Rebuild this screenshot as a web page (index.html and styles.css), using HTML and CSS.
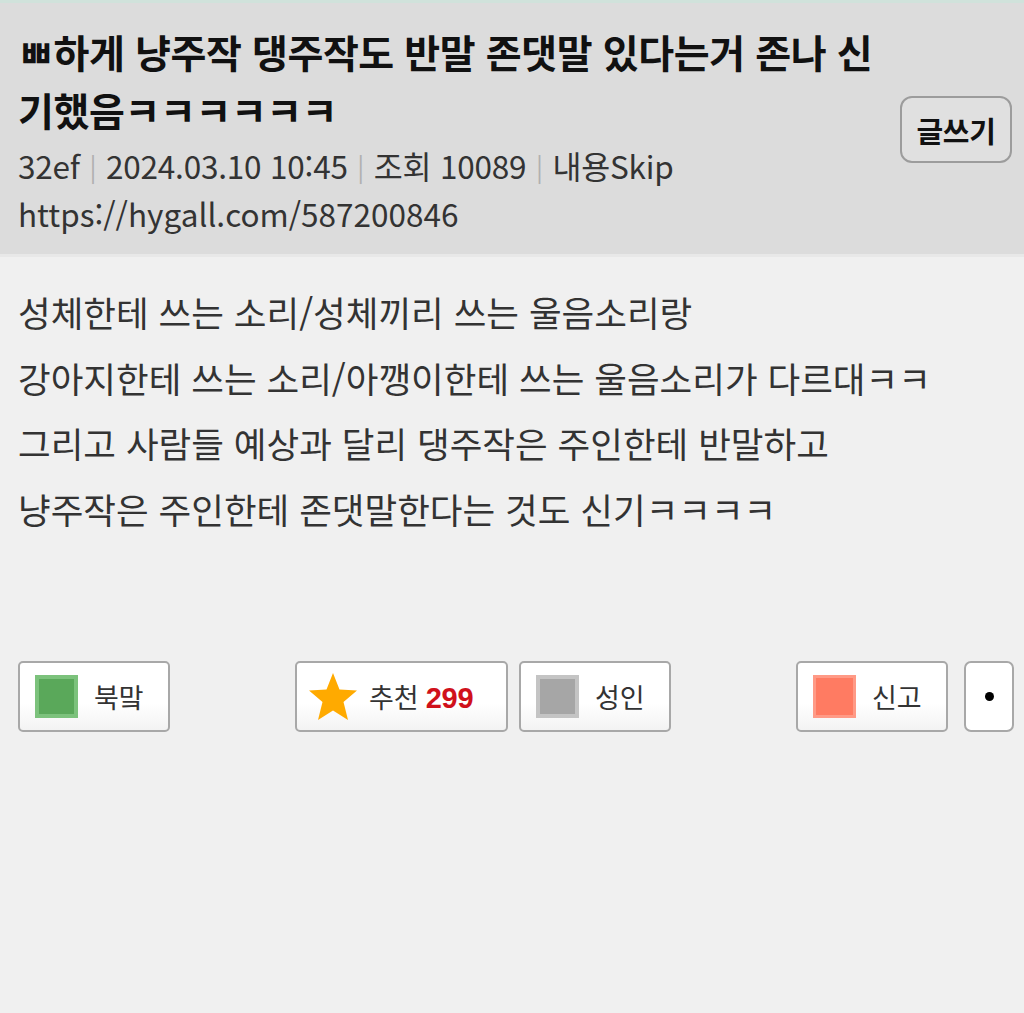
FILE: index.html
```html
<!DOCTYPE html>
<html lang="ko">
<head>
<meta charset="utf-8">
<title>hygall</title>
<link rel="stylesheet" href="styles.css">
</head>
<body>
<div class="topstrip"></div>
<header class="head">
  <div class="head-main">
    <h1 class="title">ㅃ하게 냥주작 댕주작도 반말 존댓말 있다는거 존나 신기했음ㅋㅋㅋㅋㅋㅋ</h1>
    <div class="meta">32ef <span class="sep">|</span> 2024.03.10 10:45 <span class="sep">|</span> 조회 10089 <span class="sep">|</span> 내용Skip</div>
    <div class="url">https://hygall.com/587200846</div>
  </div>
  <button class="write">글쓰기</button>
</header>
<main class="content">
  <p class="line">성체한테 쓰는 소리/성체끼리 쓰는 울음소리랑</p>
  <p class="line">강아지한테 쓰는 소리/아깽이한테 쓰는 울음소리가 다르대ㅋㅋ</p>
  <p class="line">그리고 사람들 예상과 달리 댕주작은 주인한테 반말하고</p>
  <p class="line">냥주작은 주인한테 존댓말한다는 것도 신기ㅋㅋㅋㅋ</p>
</main>
<div class="actions">
  <div class="group">
    <button class="btn"><span class="sq sq-green"></span><span class="lbl">북맠</span></button>
  </div>
  <div class="group group-mid">
    <button class="btn btn-rec">
      <svg class="star" viewBox="0 0 52 52" width="52" height="52"><polygon points="26,2 32.5,18.5 50,19.5 36.5,31 41,49 26,39.5 11,49 15.5,31 2,19.5 19.5,18.5" fill="#ffaa00"/></svg>
      <span class="lbl">추천 <b class="num">299</b></span>
    </button>
    <button class="btn"><span class="sq sq-gray"></span><span class="lbl">성인</span></button>
  </div>
  <div class="group group-right">
    <button class="btn"><span class="sq sq-red"></span><span class="lbl">신고</span></button>
    <button class="btn btn-dot"><span class="dot"></span></button>
  </div>
</div>
</body>
</html>
```
FILE: styles.css
```css
html, body {
  margin: 0;
  padding: 0;
}
body {
  background: #f0f0f0;
  font-family: "Noto Sans CJK KR", "Noto Sans", sans-serif;
  color: #333;
  width: 1024px;
  min-height: 1013px;
}
.topstrip {
  height: 3px;
  background: #d0e2db;
}
.head {
  background: #dcdcdc;
  height: 254px;
  box-sizing: border-box;
  padding: 19px 12px 0 18px;
  display: flex;
  align-items: flex-start;
  border-bottom: 3px solid #e8e8e8;
}
.head-main {
  flex: 1;
}
.title {
  margin: 0;
  width: 875px;
  font-size: 39px;
  line-height: 58px;
  font-weight: 700;
  color: #111;
  letter-spacing: -0.4px;
}
.meta {
  font-size: 31.5px;
  line-height: 47px;
  margin-top: 4px;
  color: #333;
  letter-spacing: -0.2px;
}
.sep {
  color: #b0b0b0;
  font-size: 26px;
  margin: 0 1px;
  position: relative;
  top: -2px;
}
.url {
  font-size: 31.5px;
  line-height: 45px;
  color: #333;
  letter-spacing: 0;
}
.write {
  margin-top: 74px;
  margin-left: auto;
  width: 112px;
  height: 67px;
  border: 2px solid #9c9c9c;
  border-radius: 12px;
  background: #e0e0e0;
  font-family: inherit;
  font-size: 29px;
  font-weight: 700;
  color: #111;
  padding: 0;
  letter-spacing: -0.3px;
}
.content {
  padding: 22px 0 0 18px;
  height: 374px;
  box-sizing: border-box;
}
.line {
  margin: 0;
  font-size: 35.5px;
  line-height: 65.5px;
  color: #333;
  letter-spacing: 0;
}
.actions {
  margin-top: 30px;
  padding: 0 10px 0 18px;
  display: flex;
  justify-content: space-between;
}
.group {
  display: flex;
  gap: 11px;
}
.group-right {
  gap: 16px;
}
.btn {
  height: 71px;
  width: 152px;
  box-sizing: border-box;
  border: 2px solid #a8a8a8;
  border-radius: 5px;
  background: linear-gradient(#ffffff 60%, #f3f3f3);
  display: flex;
  align-items: center;
  padding: 0 0 0 15px;
  font-family: inherit;
  color: #333;
  gap: 16px;
}
.btn-rec {
  width: 213px;
  padding-left: 10px;
  gap: 10px;
}
.btn-dot {
  width: 50px;
  padding: 0;
  justify-content: center;
  border-radius: 7px;
  background: #fff;
}
.dot {
  width: 9px;
  height: 9px;
  border-radius: 50%;
  background: #000;
}
.sq {
  width: 43px;
  height: 43px;
  flex: none;
}
.sq-green {
  background: #5aa85a;
  box-shadow: inset 0 0 0 4px #7cc27c;
}
.sq-gray {
  background: #a6a6a6;
  box-shadow: inset 0 0 0 4px #c4c4c4;
}
.sq-red {
  background: #ff7b62;
  box-shadow: inset 0 0 0 3px #ff9a86;
}
.star {
  flex: none;
  filter: blur(0.6px);
}
.lbl {
  font-size: 27px;
  letter-spacing: -0.2px;
  color: #333;
}
.num {
  color: #d0111b;
  font-weight: 700;
  font-family: "Liberation Sans", Arial, sans-serif;
  font-size: 29px;
}
```
